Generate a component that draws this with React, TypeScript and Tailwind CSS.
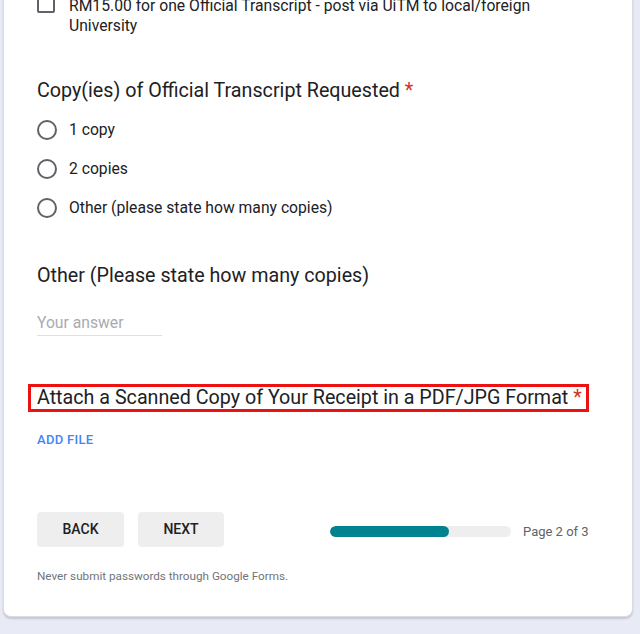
import React from 'react';

const options = ['1 copy', '2 copies', 'Other (please state how many copies)'];

function Radio({ label }: { label: string }) {
  return (
    <div className="flex items-center h-[24px]">
      <span className="w-[20px] h-[20px] rounded-full border-2 border-[#5f6368] shrink-0" />
      <span className="ml-[12px] text-[15.7px] leading-[20px] text-[#202124]">{label}</span>
    </div>
  );
}

export default function App() {
  return (
    <div className="h-[634px] overflow-hidden bg-[#e8eaf6]" style={{ fontFamily: 'Roboto, "Liberation Sans", sans-serif' }}>
      <div className="ml-[3px] w-[630px] mt-[-5px] bg-white border-x border-b border-[#dadce0] rounded-b-[8px] shadow-[0_2px_2px_rgba(0,0,0,0.15)] pl-[33px] pb-[32px]">
        {/* previous checkbox option */}
        <div className="flex items-start h-[40px]">
          <span className="w-[18px] h-[18px] rounded-[2px] border-2 border-[#5f6368] shrink-0" />
          <div className="ml-[14px] pt-[1px] text-[15.7px] leading-[20px] text-[#202124]">
            RM15.00 for one Official Transcript - post via UiTM to local/foreign
            <br />
            University
          </div>
        </div>

        <div className="mt-[44px] text-[19.7px] leading-[24px] text-[#202124]">
          Copy(ies) of Official Transcript Requested <span className="text-[#d93025]">*</span>
        </div>

        <div className="mt-[15px] flex flex-col gap-[15px]">
          {options.map((o) => (
            <Radio key={o} label={o} />
          ))}
        </div>

        <div className="mt-[44px] text-[19.7px] leading-[24px] text-[#202124]">
          Other (Please state how many copies)
        </div>

        <div className="mt-[23px] w-[125px] h-[25px] border-b border-[#e0e0e0] text-[15.7px] leading-[24px] text-[#a8abaf]">
          Your answer
        </div>

        <div className="mt-[48px] -ml-[9px] inline-block border-[3px] border-[#ee1111] pl-[6px] pr-[4px] text-[19.7px] leading-[22px] text-[#202124]">
          Attach a Scanned Copy of Your Receipt in a PDF/JPG Format <span className="text-[#d93025]">*</span>
        </div>

        <div className="mt-[20px] text-[13px] leading-[16px] font-medium tracking-[0.3px] text-[#4285f4]">
          ADD FILE
        </div>

        <div className="mt-[64px] flex items-start">
          <button className="w-[87px] h-[35px] rounded-[4px] bg-[#eeeeee] text-[14px] font-medium text-[#202124]">BACK</button>
          <button className="ml-[14px] w-[86px] h-[35px] rounded-[4px] bg-[#eeeeee] text-[14px] font-medium text-[#202124]">NEXT</button>
          <div className="mt-[14px] ml-[106px] w-[181px] h-[11px] rounded-full bg-[#eeeeee] overflow-hidden">
            <div className="h-full w-[119px] rounded-full bg-[#00838f]" />
          </div>
          <span className="mt-[12px] ml-[12px] text-[13px] leading-[16px] text-[#5f6368]">Page 2 of 3</span>
        </div>

        <div className="mt-[21px] text-[11.7px] leading-[16px] text-[#70757a]">
          Never submit passwords through Google Forms.
        </div>
      </div>
    </div>
  );
}
